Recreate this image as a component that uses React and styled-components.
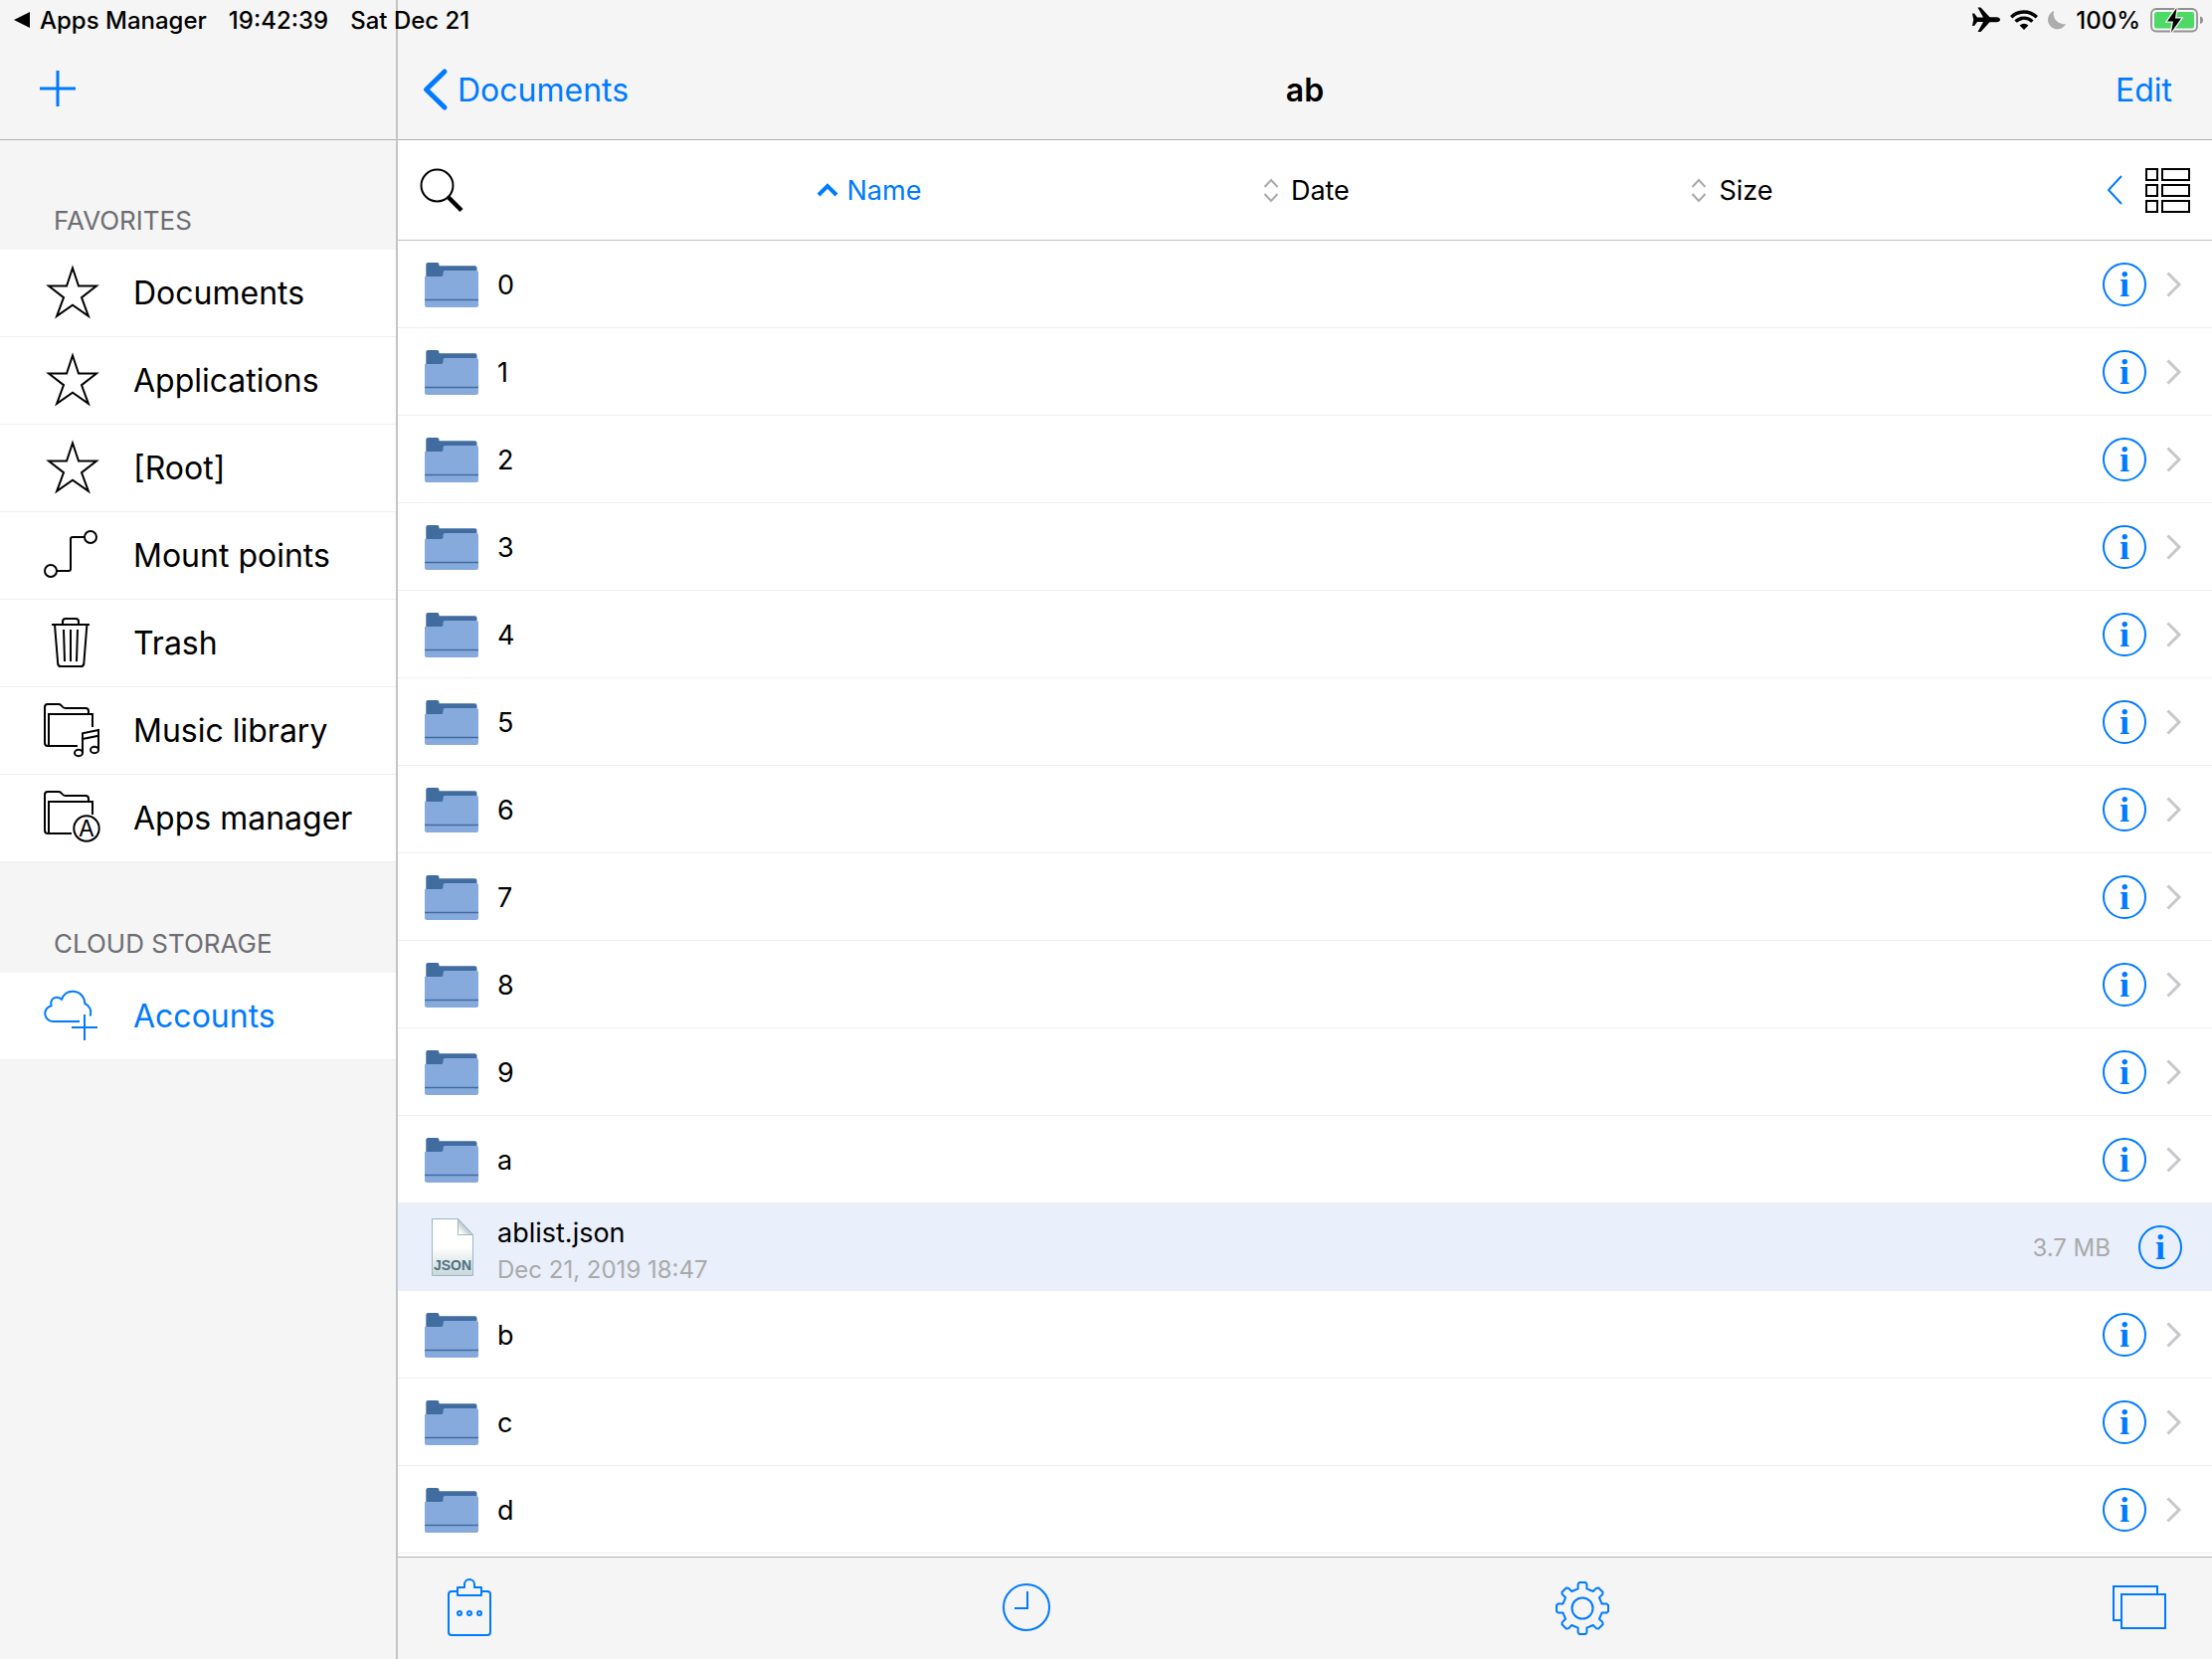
import React from "react";
import styled, { createGlobalStyle } from "styled-components";

const blue = "#007aff";
const chrome = "#f5f5f5";
const hairline = "#efeff0";
const divider = "#c4c4c6";
const barLine = "#b2b2b2";

const GlobalStyle = createGlobalStyle`
  *, *::before, *::after { box-sizing: border-box; }
  body {
    margin: 0;
    background: #fff;
    color: #000;
    font-family: Inter, "Liberation Sans", sans-serif;
  }
  button { font: inherit; color: inherit; background: none; border: 0; padding: 0; cursor: pointer; }
  a { color: inherit; text-decoration: none; }
  ul, h1, h2, p { margin: 0; padding: 0; font: inherit; }
  ul { list-style: none; }
  svg { display: block; flex: none; overflow: visible; }
`;

const Screen = styled.div`
  display: grid;
  grid-template-columns: 400px minmax(0, 1fr);
  grid-template-rows: 100vh;
`;

/* Status bar shares the grid cell row with the panels and sits over them. */
const StatusBar = styled.div`
  grid-area: 1 / 1 / 2 / 3;
  align-self: start;
  z-index: 1;
  display: flex;
  justify-content: space-between;
  align-items: center;
  height: 40px;
  padding: 0 8px 0 14px;
  font-size: 24px;
  font-weight: 500;
  pointer-events: none;
`;

const StatusGroup = styled.div`
  display: flex;
  align-items: center;
  gap: ${(p) => p.$gap}px;
`;

const Sidebar = styled.aside`
  grid-area: 1 / 1 / 2 / 2;
  background: ${chrome};
  border-right: 2px solid ${divider};
`;

const Main = styled.main`
  grid-area: 1 / 2 / 2 / 3;
  display: flex;
  flex-direction: column;
  min-width: 0;
`;

const NavBar = styled.header`
  flex: none;
  display: grid;
  grid-template-columns: 1fr auto 1fr;
  align-items: center;
  height: 141px;
  padding: 40px ${(p) => p.$inset}px 0;
  background: ${chrome};
  border-bottom: 1px solid ${barLine};
  font-size: 32px;
`;

const Title = styled.h1`
  font-weight: 600;
`;

const NavButton = styled.button`
  display: flex;
  align-items: center;
  gap: 10px;
  justify-self: ${(p) => (p.$end ? "end" : "start")};
  padding-right: ${(p) => (p.$end ? 16 : 0)}px;
  color: ${blue};
`;

const SectionTitle = styled.h2`
  display: flex;
  align-items: flex-end;
  height: 110px;
  padding: 0 54px 14px;
  font-size: 26px;
  line-height: 30px;
  color: #6d6d72;

  a + & {
    height: 111px;
  }
`;

const SideLink = styled.a`
  display: flex;
  align-items: center;
  gap: 30px;
  height: 88px;
  padding-left: 44px;
  background: #fff;
  box-shadow: inset 0 -1px ${hairline};
  font-size: 32px;
  white-space: nowrap;
  color: ${(p) => (p.$accent ? blue : "#000")};
`;

const SideLabel = styled.span`
  padding-bottom: 2px;
`;

const SortBar = styled.div`
  flex: none;
  display: flex;
  align-items: center;
  height: 101px;
  padding: 0 22px;
  border-bottom: 1px solid ${divider};
`;

const SearchButton = styled.button`
  width: 64px;
`;

const SortOptions = styled.div`
  flex: 1;
  display: flex;
  justify-content: space-evenly;
  gap: 8px;
`;

const SortButton = styled.button`
  display: flex;
  align-items: center;
  gap: ${(p) => (p.$active ? 10 : 12)}px;
  font-size: 27px;
  color: ${(p) => (p.$active ? blue : "#000")};
`;

const ViewButtons = styled.div`
  display: flex;
  align-items: center;
  gap: 23px;
`;

const FileList = styled.ul`
  flex: 1;
  min-height: 0;
  overflow: hidden;
`;

const FileRow = styled.li`
  display: flex;
  align-items: center;
  height: 88px;
  padding: 0 30px 0 26px;
  background: ${(p) => (p.$selected ? "#e9effb" : "#fff")};
  box-shadow: inset 0 -1px ${hairline};
`;

const FileLink = styled.a`
  flex: 1;
  display: flex;
  align-items: center;
  gap: 18px;
  font-size: 27px;
`;

const IconSlot = styled.span`
  display: flex;
  justify-content: center;
  width: 56px;
`;

const FileText = styled.span`
  display: flex;
  flex-direction: column;
  line-height: 37px;
  padding-top: ${(p) => (p.$double ? 8 : 0)}px;
`;

const Meta = styled.span`
  font-size: 24px;
  color: #aaaaaa;
`;

const RowTail = styled.div`
  display: flex;
  align-items: center;
  gap: ${(p) => (p.$file ? 28 : 20)}px;
`;

const Toolbar = styled.footer`
  flex: none;
  display: flex;
  justify-content: space-between;
  align-items: center;
  height: 103px;
  padding: 0 42px;
  background: ${chrome};
  border-top: 1px solid ${barLine};
`;

const Stroke = ({ w, h = w, color = "currentColor", width = 2, children, ...rest }) => (
  <svg width={w} height={h} viewBox={`0 0 ${w} ${h}`} fill="none" stroke={color} strokeWidth={width} aria-hidden="true" {...rest}>
    {children}
  </svg>
);

const StarIcon = () => (
  <Stroke w={60} strokeMiterlimit="10">
    <path d="M29 4.500L35 22.500H53L38 34.200L44.900 52.800L29 41.800L13.100 52.800L20 34.200L5 22.500H23Z" />
  </Stroke>
);

const MountIcon = () => (
  <Stroke w={60}>
    <circle cx="47" cy="11" r="6" />
    <circle cx="7" cy="45" r="6" />
    <path d="M13 45H25a2 2 0 0 0 2-2V13a2 2 0 0 1 2-2H41" />
  </Stroke>
);

const TrashIcon = () => (
  <Stroke w={60}>
    <path d="M8 11H46M19 11V8a3 3 0 0 1 3-3H32a3 3 0 0 1 3 3V11" />
    <path d="M11 11L14.2 50.5a3 3 0 0 0 3 2.5H37.3a3 3 0 0 0 3-2.5L43.4 11" />
    <path d="M20 16L21 48M27 16V48M34 16L33 48" />
  </Stroke>
);

const FolderOutline = ({ end }) => (
  <>
    <path d="M5 45H4a3 3 0 0 1-3-3V6a3 3 0 0 1 3-3H15c3.500 0 3 4 6.500 4H42a3 3 0 0 1 3 3V13" />
    <path d={`M49 26V13H5V45H${end}`} />
  </>
);

const MusicIcon = () => (
  <Stroke w={60}>
    <FolderOutline end={34} />
    <path d="M39 52V32.300L55 29V49M39 38L55 34.700" />
    <ellipse cx="35" cy="52" rx="4" ry="3.200" />
    <ellipse cx="51" cy="49" rx="4" ry="3.200" />
  </Stroke>
);

const AppsIcon = () => (
  <Stroke w={60}>
    <FolderOutline end={28} />
    <circle cx="43" cy="40" r="12.700" />
    <text x="43" y="48" textAnchor="middle" fontSize="23" fill="currentColor" stroke="none">A</text>
  </Stroke>
);

const CloudIcon = () => (
  <Stroke w={60}>
    <path d="M36 35H9A8 8 0 0 1 7.500 19.200C6.500 14 9 10.800 13 10.800C15 10.800 16.500 11.500 18 12.800C20 7.500 24 4.800 29 4.800C36 4.800 41 10 41.300 17C46 19 48.500 24 46.600 29.600" />
    <path d="M41 28V54M28 41H54" />
  </Stroke>
);

const PlusIcon = () => (
  <Stroke w={36} h={38} width={3}>
    <path d="M18 0V36M0 18H36" />
  </Stroke>
);

const BackIcon = () => (
  <Stroke w={26} h={42} width={5} strokeLinecap="round" strokeLinejoin="round">
    <path d="M23 3L4.500 21L23 39" />
  </Stroke>
);

const SearchIcon = () => (
  <Stroke w={44}>
    <circle cx="17.500" cy="17.500" r="16" />
    <path d="M29 29.500L42 42.500" strokeWidth="4.500" />
  </Stroke>
);

const SortUpIcon = () => (
  <Stroke w={20} h={14} width={4}>
    <path d="M1 12L10 3L19 12" />
  </Stroke>
);

const SortBothIcon = () => (
  <Stroke w={16} h={24} color="#aaaaaa" width={2}>
    <path d="M1.500 9L8 2L14.500 9M1.500 16L8 23L14.500 16" />
  </Stroke>
);

const CollapseIcon = () => (
  <Stroke w={16} h={30} color={blue}>
    <path d="M15 1L2 15L15 29" />
  </Stroke>
);

const ListViewIcon = () => (
  <Stroke w={45}>
    {[1, 17, 33].map((y) => (
      <React.Fragment key={y}>
        <rect x="1" y={y} width="11" height="11" />
        <rect x="17" y={y} width="27" height="11" />
      </React.Fragment>
    ))}
  </Stroke>
);

const FolderIcon = () => (
  <svg width="54" height="44" viewBox="0 0 54 44" aria-hidden="true">
    <path d="M1.300 16V2a2 2 0 0 1 2-2H12.500a2 2 0 0 1 2 2V3.300H50.500a2 2 0 0 1 2 2V16Z" fill="#416ca0" />
    <path d="M0 14H16.500a2 2 0 0 0 2-2V10a2 2 0 0 1 2-2H52a2 2 0 0 1 2 2V43a2 2 0 0 1-2 2H2a2 2 0 0 1-2-2Z" fill="#87aadc" />
    <path d="M0 37.500H54" stroke="#416ca0" strokeWidth="1.300" />
  </svg>
);

const JsonIcon = () => (
  <svg width="40" height="58" viewBox="0 0 40 58" aria-hidden="true">
    <defs>
      <linearGradient id="sheet" x1="0" y1="0" x2="0" y2="1">
        <stop offset="0.500" stopColor="#ffffff" />
        <stop offset="1" stopColor="#c9d7db" />
      </linearGradient>
      <linearGradient id="fold" x1="0" y1="1" x2="0.700" y2="0.300">
        <stop offset="0.200" stopColor="#ffffff" />
        <stop offset="1" stopColor="#8fa9b3" />
      </linearGradient>
    </defs>
    <path d="M0.500 0.500H26.500L41.500 16.500V57.500H0.500Z" fill="url(#sheet)" stroke="#9db7c1" />
    <path d="M26.500 0.500V16.500H41.500Z" fill="url(#fold)" stroke="#9db7c1" />
    <text x="21" y="52" textAnchor="middle" fontFamily="Liberation Sans, sans-serif" fontWeight="700" fontSize="14" fill="#4d7080">JSON</text>
  </svg>
);

const InfoIcon = () => (
  <Stroke w={44} color={blue}>
    <circle cx="22" cy="22" r="21" />
    <text x="22" y="34" textAnchor="middle" fontFamily="Liberation Serif, serif" fontWeight="700" fontSize="36" fill={blue} stroke="none">i</text>
  </Stroke>
);

const DisclosureIcon = () => (
  <Stroke w={16} h={26} color="#c7c7cc" width={3}>
    <path d="M1.500 1.500L13 13L1.500 24.500" />
  </Stroke>
);

const ClipboardIcon = () => (
  <Stroke w={60}>
    <path d="M18 13H12a3 3 0 0 0-3 3V54a3 3 0 0 0 3 3H48a3 3 0 0 0 3-3V16a3 3 0 0 0-3-3H42" />
    <path d="M18 17V9H25V6a5 5 0 0 1 10 0V9H42V17Z" strokeLinejoin="round" />
    <circle cx="20" cy="35" r="2" />
    <circle cx="30" cy="35" r="2" />
    <circle cx="40" cy="35" r="2" />
  </Stroke>
);

const ClockIcon = () => (
  <Stroke w={60}>
    <circle cx="30" cy="29" r="23" />
    <path d="M31 13V30H18" />
  </Stroke>
);

const tooth = [[-4.4, -19.6], [-4.4, -24.4], [-3, -26], [3, -26], [4.4, -24.4], [4.4, -19.6]];
const gearPath =
  "M" +
  Array.from({ length: 8 }, (_, k) => (k * Math.PI) / 4)
    .flatMap((a) =>
      tooth.map(([x, y]) =>
        [29 + x * Math.cos(a) - y * Math.sin(a), 30 + x * Math.sin(a) + y * Math.cos(a)]
          .map((n) => n.toFixed(2))
          .join(" ")
      )
    )
    .join("L") +
  "Z";

const GearIcon = () => (
  <Stroke w={60} strokeLinejoin="round">
    <path d={gearPath} />
    <circle cx="29" cy="30" r="10.500" />
  </Stroke>
);

const WindowsIcon = () => (
  <Stroke w={60}>
    <path d="M11 42H3V8H47V16" />
    <rect x="11" y="16" width="44" height="34" />
  </Stroke>
);

const ReturnIcon = () => (
  <svg width="16" height="16" viewBox="0 0 16 16" aria-hidden="true">
    <path d="M0 8L16 0V16Z" />
  </svg>
);

const PlaneIcon = () => (
  <svg width="28" height="26" viewBox="0 0 28 26" aria-hidden="true">
    <path d="M0 6.500H2L5 10.500H11L5.500 0.500H8.500L17.500 10.300H24.500C26.500 10.300 28 11.500 28 12.800S26.500 15.300 24.500 15.300H17.500L8.500 25H5.500L11 15.100H5L2 19H0L1.200 12.800Z" />
  </svg>
);

const WifiIcon = () => (
  <svg width="28" height="20" viewBox="0 0 28 20" fill="none" stroke="#000" strokeWidth="3.400" aria-hidden="true">
    <path d="M1.200 7.200A18.200 18.200 0 0 1 26.800 7.200" />
    <path d="M5.600 11.600A12 12 0 0 1 22.400 11.600" />
    <path d="M14 20L9.600 15.600A6.300 6.300 0 0 1 18.400 15.600Z" fill="#000" stroke="none" />
  </svg>
);

const MoonIcon = () => (
  <svg width="18" height="18" viewBox="0 0 18 18" aria-hidden="true">
    <path d="M6 0A9.500 9.500 0 1 0 18 13A10.500 10.500 0 0 1 6 0Z" fill="#adadad" />
  </svg>
);

const BatteryIcon = () => (
  <svg width="54" height="25" viewBox="0 0 54 25" aria-hidden="true">
    <rect x="1" y="1" width="46" height="22.500" rx="5" fill="none" stroke="#929292" strokeWidth="1.800" />
    <rect x="4" y="4" width="40" height="16.500" rx="2.500" fill="#4cd964" />
    <path d="M50 8.500C52.500 9 53 11 53 12.300S52.500 15.500 50 16Z" fill="#929292" />
    <path d="M26.500 0L17 13.500H23L21 24.500L31 10.500H25Z" fill="#000" stroke="#f4f4f4" strokeWidth="2.600" paintOrder="stroke" />
  </svg>
);

const favorites = [
  ["Documents", StarIcon],
  ["Applications", StarIcon],
  ["[Root]", StarIcon],
  ["Mount points", MountIcon],
  ["Trash", TrashIcon],
  ["Music library", MusicIcon],
  ["Apps manager", AppsIcon],
];

const files = [
  ..."0123456789a".split("").map((name) => ({ name })),
  { name: "ablist.json", date: "Dec 21, 2019 18:47", size: "3.7 MB" },
  ..."bcd".split("").map((name) => ({ name })),
];

const tools = [
  ["Clipboard", ClipboardIcon],
  ["Recent", ClockIcon],
  ["Settings", GearIcon],
  ["Windows", WindowsIcon],
];

const ToolButton = styled.button`
  color: ${blue};
`;

function File({ name, date, size }) {
  const isFile = Boolean(date);
  return (
    <FileRow $selected={isFile}>
      <FileLink href="#">
        <IconSlot>{isFile ? <JsonIcon /> : <FolderIcon />}</IconSlot>
        <FileText $double={isFile}>
          <span>{name}</span>
          {date && <Meta>{date}</Meta>}
        </FileText>
      </FileLink>
      <RowTail $file={isFile}>
        {size && <Meta>{size}</Meta>}
        <button type="button" aria-label={`Info about ${name}`}>
          <InfoIcon />
        </button>
        {!isFile && <DisclosureIcon />}
      </RowTail>
    </FileRow>
  );
}

export default function App() {
  return (
    <>
      <GlobalStyle />
      <Screen>
        <StatusBar>
          <StatusGroup $gap={22}>
            <StatusGroup $gap={10}>
              <ReturnIcon />
              <span>Apps Manager</span>
            </StatusGroup>
            <span>19:42:39</span>
            <span>Sat Dec 21</span>
          </StatusGroup>
          <StatusGroup $gap={10}>
            <PlaneIcon />
            <WifiIcon />
            <MoonIcon />
            <span>100%</span>
            <BatteryIcon />
          </StatusGroup>
        </StatusBar>

        <Sidebar>
          <NavBar $inset={40}>
            <NavButton type="button" aria-label="Add">
              <PlusIcon />
            </NavButton>
          </NavBar>
          <nav>
            <SectionTitle>FAVORITES</SectionTitle>
            {favorites.map(([label, Icon]) => (
              <SideLink key={label} href="#">
                <Icon />
                <SideLabel>{label}</SideLabel>
              </SideLink>
            ))}
            <SectionTitle>CLOUD STORAGE</SectionTitle>
            <SideLink href="#" $accent>
              <CloudIcon />
              <SideLabel>Accounts</SideLabel>
            </SideLink>
          </nav>
        </Sidebar>

        <Main>
          <NavBar $inset={24}>
            <NavButton type="button">
              <BackIcon />
              Documents
            </NavButton>
            <Title>ab</Title>
            <NavButton type="button" $end>
              Edit
            </NavButton>
          </NavBar>

          <SortBar>
            <SearchButton type="button" aria-label="Search">
              <SearchIcon />
            </SearchButton>
            <SortOptions>
              <SortButton type="button" $active>
                <SortUpIcon />
                Name
              </SortButton>
              <SortButton type="button">
                <SortBothIcon />
                Date
              </SortButton>
              <SortButton type="button">
                <SortBothIcon />
                Size
              </SortButton>
            </SortOptions>
            <ViewButtons>
              <button type="button" aria-label="Collapse">
                <CollapseIcon />
              </button>
              <button type="button" aria-label="List view">
                <ListViewIcon />
              </button>
            </ViewButtons>
          </SortBar>

          <FileList>
            {files.map((f) => (
              <File key={f.name} {...f} />
            ))}
          </FileList>

          <Toolbar>
            {tools.map(([label, Icon]) => (
              <ToolButton key={label} type="button" aria-label={label}>
                <Icon />
              </ToolButton>
            ))}
          </Toolbar>
        </Main>
      </Screen>
    </>
  );
}
